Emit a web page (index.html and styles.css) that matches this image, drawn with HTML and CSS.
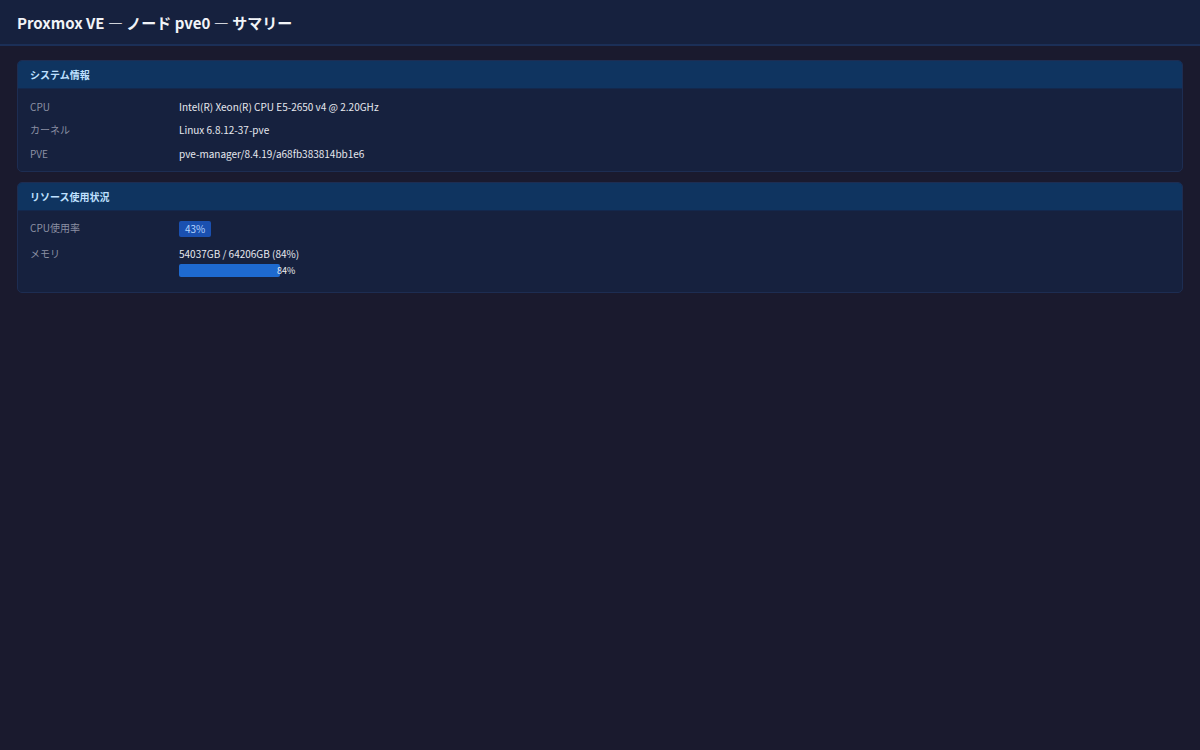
FILE: index.html
```html
<!DOCTYPE html>
<html lang="ja">
<head>
<meta charset="utf-8">
<title>Proxmox VE — ノード pve0 — サマリー</title>
<link rel="stylesheet" href="styles.css">
</head>
<body>
<header class="topbar">
  <h1 class="title">Proxmox VE — ノード pve0 — サマリー</h1>
</header>
<main class="content">
  <section class="card">
    <div class="card-head">システム情報</div>
    <div class="card-body">
      <div class="row"><div class="label">CPU</div><div class="value">Intel(R) Xeon(R) CPU E5-2650 v4 @ 2.20GHz</div></div>
      <div class="row"><div class="label">カーネル</div><div class="value">Linux 6.8.12-37-pve</div></div>
      <div class="row"><div class="label">PVE</div><div class="value">pve-manager/8.4.19/a68fb383814bb1e6</div></div>
    </div>
  </section>
  <section class="card">
    <div class="card-head">リソース使用状況</div>
    <div class="card-body card-body-res">
      <div class="row"><div class="label">CPU使用率</div><div class="value"><span class="badge">43%</span></div></div>
      <div class="row"><div class="label">メモリ</div><div class="value">
        <div>54037GB / 64206GB (84%)</div>
        <div class="bar"><div class="fill" style="width:84%"></div><span class="bar-label">84%</span></div>
      </div></div>
    </div>
  </section>
</main>
</body>
</html>
```
FILE: styles.css
```css
* { box-sizing: border-box; }
html, body { margin: 0; padding: 0; }
body {
  background: #1a1a2e;
  color: #e0e0e0;
  font-family: "Noto Sans CJK JP", "Noto Sans", sans-serif;
  font-size: 10px;
  min-height: 750px;
}
.topbar {
  background: #16213e;
  border-bottom: 2px solid #1b2f57;
  height: 46px;
  display: flex;
  align-items: center;
  padding: 0 17px;
}
.title {
  margin: 0;
  font-size: 15px;
  font-weight: 700;
  color: #f2f4f8;
}
.content {
  padding: 14px 17px;
  display: flex;
  flex-direction: column;
  gap: 10px;
}
.card {
  background: #16213e;
  border: 1px solid #1d2d52;
  border-radius: 5px;
  overflow: hidden;
}
.card-head {
  background: #0f3460;
  color: #bfe0ff;
  font-weight: 700;
  font-size: 10px;
  height: 28px;
  display: flex;
  align-items: center;
  padding: 0 12px;
  border-bottom: 1px solid #13284d;
}
.card-body {
  padding: 6px 12px 5px;
}
.card-body-res {
  padding-bottom: 7px;
}
.row {
  display: flex;
  align-items: flex-start;
  padding: 4.75px 0;
  line-height: 14px;
}
.label {
  width: 149px;
  color: #8b90a3;
  flex: none;
}
.value { color: #e6e8ee; }
.badge {
  display: inline-block;
  background: #1a50b0;
  color: #b4d4ff;
  padding: 1px 6px;
  border-radius: 2px;
  line-height: 14px;
}
.bar {
  position: relative;
  width: 120px;
  height: 13px;
  margin-top: 3.5px;
  margin-bottom: 3px;
}
.fill {
  height: 100%;
  background: #1e6ad0;
  border-radius: 2px;
}
.bar-label {
  position: absolute;
  left: 98px;
  top: 0;
  line-height: 13px;
  font-size: 9px;
  color: #f0f0f0;
}
```
